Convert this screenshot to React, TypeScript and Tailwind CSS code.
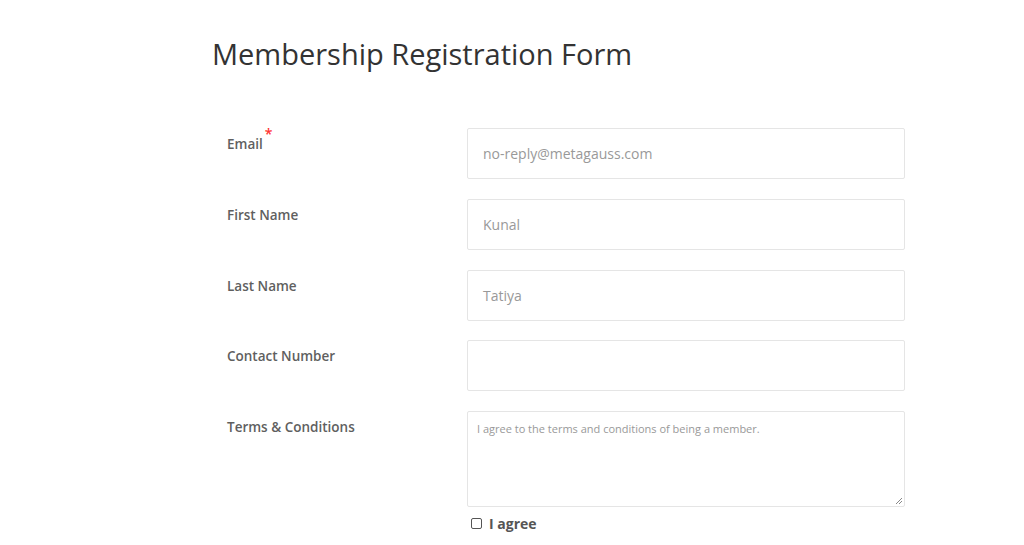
const font = { fontFamily: '"Open Sans", "Noto Sans", sans-serif' };

type Field = { label: string; value: string; required?: boolean };

const fields: Field[] = [
  { label: 'Email', value: 'no-reply@metagauss.com', required: true },
  { label: 'First Name', value: 'Kunal' },
  { label: 'Last Name', value: 'Tatiya' },
  { label: 'Contact Number', value: '' },
];

function Row({ label, required, children }: { label: string; required?: boolean; children: React.ReactNode }) {
  return (
    <div className="flex">
      <div className="w-[255px] shrink-0 pl-[15px] pt-[3px]">
        <span className="relative text-[13.5px] font-semibold text-[#5f5f5f]">
          {label}
          {required && <span className="absolute -top-[12px] left-full ml-[2px] text-[14px] text-[#ff3333]">*</span>}
        </span>
      </div>
      <div className="w-[438px]">{children}</div>
    </div>
  );
}

export default function App() {
  return (
    <div className="min-h-[545px] bg-white" style={font}>
      <div className="pl-[212px] pt-[34px]">
        <h1 className="text-[29px] leading-[40px] font-normal text-[#333]">Membership Registration Form</h1>

        <div className="mt-[54px] flex flex-col gap-[19.75px]">
          {fields.map((f) => (
            <Row key={f.label} label={f.label} required={f.required}>
              <div className="h-[51px] border border-[#e5e5e5] rounded-[2px] flex items-center px-[15px] text-[14px] text-[#999]">
                {f.value}
              </div>
            </Row>
          ))}
          <Row label="Terms & Conditions">
            <div className="relative h-[96px] border border-[#e5e5e5] rounded-[2px] px-[9px] pt-[9px] text-[11px] text-[#999]">
              I agree to the terms and conditions of being a member.
              <svg className="absolute right-[1px] bottom-[1px]" width="9" height="9" viewBox="0 0 9 9">
                <line x1="8" y1="2" x2="2" y2="8" stroke="#888" strokeWidth="1" />
                <line x1="8" y1="5" x2="5" y2="8" stroke="#888" strokeWidth="1" />
              </svg>
            </div>
            <label className="mt-[6px] ml-[4px] flex items-center gap-[7px] text-[14px] font-bold text-[#555]">
              <span className="w-[11px] h-[11px] border border-[#555] rounded-[2px] bg-white" />
              I agree
            </label>
          </Row>
        </div>
      </div>
    </div>
  );
}
